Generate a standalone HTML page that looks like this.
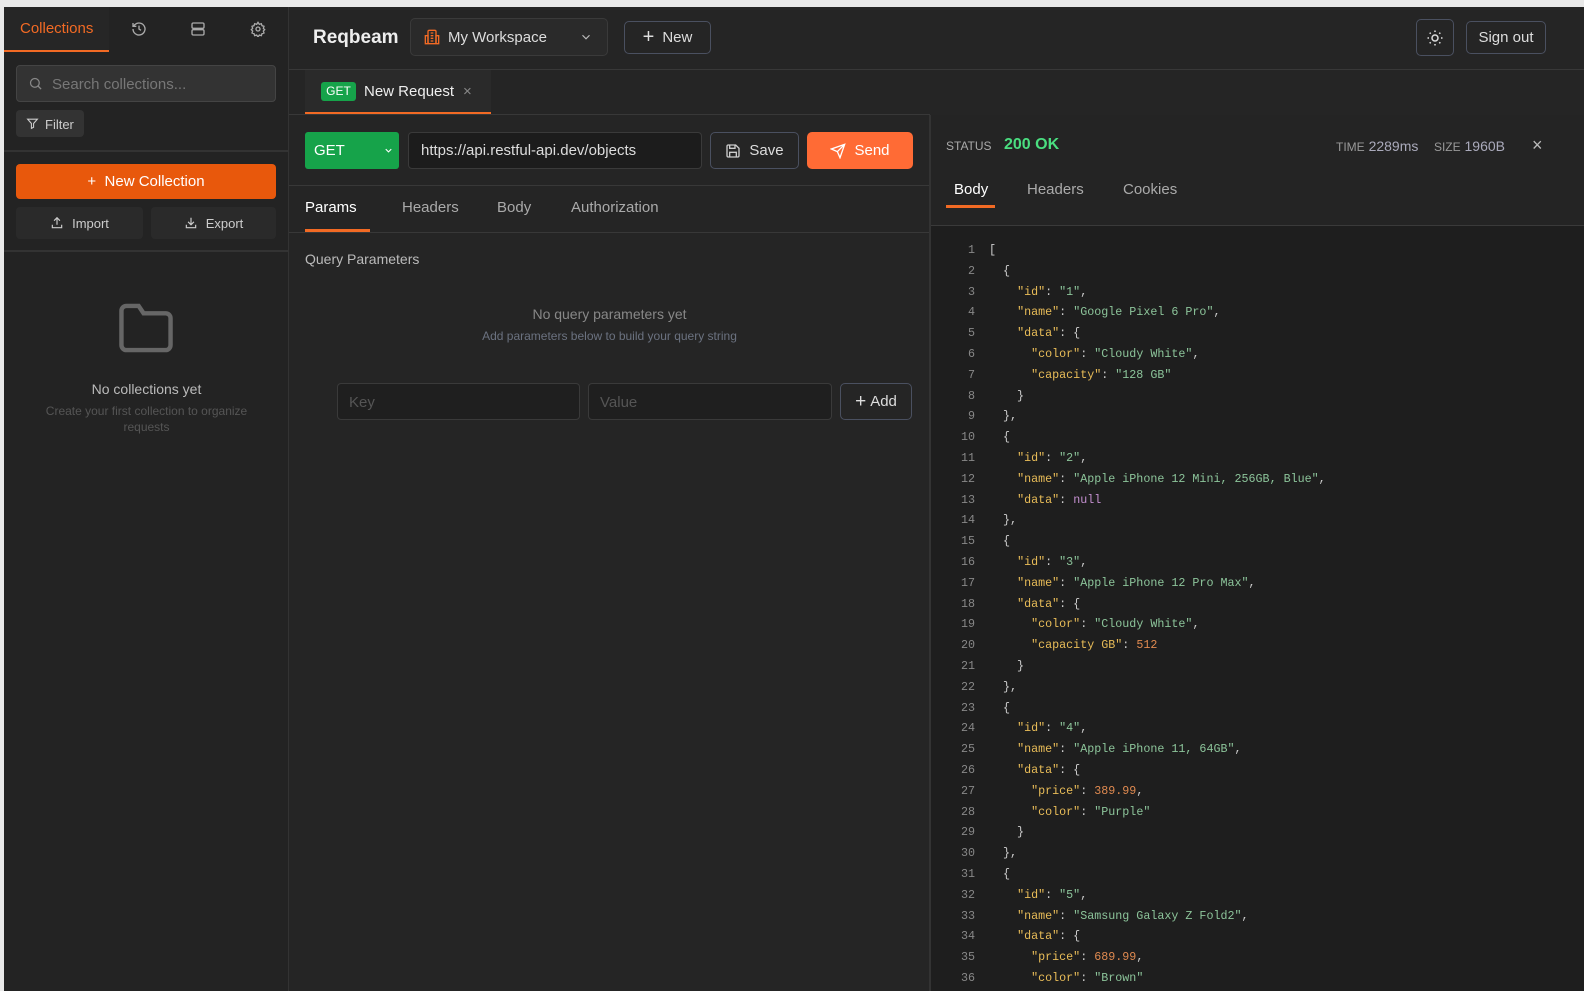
<!DOCTYPE html>
<html><head><meta charset="utf-8"><style>
*{box-sizing:border-box;margin:0;padding:0}
body{width:1584px;height:991px;overflow:hidden;background:#e9e9e9;font-family:"Liberation Sans",sans-serif;position:relative}
.abs{position:absolute}
#side{left:4px;top:7px;width:285px;height:984px;background:#232323;border-right:1px solid #333}
#main{left:289px;top:7px;width:1295px;height:984px;background:#252525}
.btn{position:absolute;border:1px solid #444;border-radius:5px;color:#ddd;font-size:15px;display:flex;align-items:center;justify-content:center;gap:8px}
.code{font-family:"Liberation Mono",monospace;font-size:11.7px;line-height:20.8px;white-space:pre;color:#ccc}
.k{color:#e8bc58}.s{color:#8cc49a}.n{color:#e08a50}.nl{color:#c48fd0}
.ln{color:#888;text-align:right}
</style></head><body>
<div id="side" class="abs">
 <div class="abs" style="left:0;top:0;width:105px;height:45px;border-bottom:2px solid #f26a24;background:#262626"></div>
 <div class="abs" style="left:16px;top:13px;color:#f26a24;font-size:15px">Collections</div>
 <svg class="abs" style="left:127px;top:14px" width="16" height="16" viewBox="0 0 24 24" fill="none" stroke="#aaa" stroke-width="2"><path d="M3 12a9 9 0 1 0 3-6.7L3 8"/><path d="M3 3v5h5"/><path d="M12 7v5l3 2"/></svg>
 <svg class="abs" style="left:186px;top:14px" width="16" height="16" viewBox="0 0 24 24" fill="none" stroke="#aaa" stroke-width="2"><rect x="3" y="3" width="18" height="8" rx="2"/><rect x="3" y="13" width="18" height="8" rx="2"/></svg>
 <svg class="abs" style="left:246px;top:14px" width="16" height="16" viewBox="0 0 24 24" fill="none" stroke="#aaa" stroke-width="2"><circle cx="12" cy="12" r="3"/><path d="M12 2l2 3 3-1 1 3 3 1-1 3 2 2-2 2 1 3-3 1-1 3-3-1-2 3-2-3-3 1-1-3-3-1 1-3-2-2 2-2-1-3 3-1 1-3 3 1z"/></svg>
 <div class="abs" style="left:12px;top:58px;width:260px;height:37px;background:#333;border:1px solid #444;border-radius:4px"></div>
 <svg class="abs" style="left:24px;top:69px" width="15" height="15" viewBox="0 0 24 24" fill="none" stroke="#888" stroke-width="2"><circle cx="11" cy="11" r="7"/><path d="M21 21l-5-5"/></svg>
 <div class="abs" style="left:48px;top:69px;color:#777;font-size:15px">Search collections...</div>
 <div class="abs" style="left:12px;top:103px;width:68px;height:27px;background:#333;border-radius:4px;color:#ccc;font-size:13px;padding:7px 0 0 29px">Filter</div>
 <svg class="abs" style="left:22px;top:110px" width="13" height="13" viewBox="0 0 24 24" fill="none" stroke="#ccc" stroke-width="2"><path d="M3 4h18l-7 8v7l-4 2v-9z"/></svg>
 <div class="abs" style="left:0;top:143px;width:285px;height:2px;background:#333"></div>
 <div class="abs" style="left:12px;top:157px;width:260px;height:35px;background:#e8580c;border-radius:4px;color:#fff;font-size:15px;text-align:center;line-height:35px">+&nbsp;&nbsp;New Collection</div>
 <div class="abs" style="left:12px;top:200px;width:127px;height:32px;background:#2a2a2a;border-radius:4px;color:#ccc;font-size:13px;display:flex;align-items:center;justify-content:center;gap:8px"><svg width="14" height="14" viewBox="0 0 24 24" fill="none" stroke="#ccc" stroke-width="2"><path d="M12 15V3M7 8l5-5 5 5M4 15v5h16v-5"/></svg>Import</div>
 <div class="abs" style="left:147px;top:200px;width:125px;height:32px;background:#2a2a2a;border-radius:4px;color:#ccc;font-size:13px;display:flex;align-items:center;justify-content:center;gap:8px"><svg width="14" height="14" viewBox="0 0 24 24" fill="none" stroke="#ccc" stroke-width="2"><path d="M12 3v12M7 10l5 5 5-5M4 15v5h16v-5"/></svg>Export</div>
 <div class="abs" style="left:0;top:243px;width:285px;height:2px;background:#333"></div>
 <svg class="abs" style="left:112px;top:294px" width="60" height="54" viewBox="0 0 24 22" fill="none" stroke="#666" stroke-width="1.8"><path d="M2 4a2 2 0 0 1 2-2h5l2 3h9a2 2 0 0 1 2 2v11a2 2 0 0 1-2 2H4a2 2 0 0 1-2-2z"/></svg>
 <div class="abs" style="left:0;top:374px;width:285px;text-align:center;color:#bbb;font-size:14px">No collections yet</div>
 <div class="abs" style="left:30px;top:396px;width:225px;text-align:center;color:#555;font-size:12px;line-height:16px">Create your first collection to organize requests</div>
</div>
<div id="main" class="abs">
 <div class="abs" style="left:24px;top:20px;color:#eee;font-size:19px;font-weight:bold">Reqbeam</div>
 <div class="btn" style="left:121px;top:11px;width:198px;height:38px;justify-content:flex-start;padding-left:13px;background:#2a2a2a;border-color:#3a3a3a"><svg width="16" height="16" viewBox="0 0 24 24" fill="none" stroke="#f26a24" stroke-width="2"><rect x="6" y="2" width="12" height="20" rx="2"/><path d="M2 10h4v12H2zM18 10h4v12h-4zM10 6h4M10 10h4M10 14h4M10 18h4"/></svg>My Workspace<svg style="margin-left:auto;margin-right:14px" width="14" height="14" viewBox="0 0 24 24" fill="none" stroke="#bbb" stroke-width="2"><path d="M6 9l6 6 6-6"/></svg></div>
 <div class="btn" style="left:335px;top:14px;width:87px;height:33px;border-color:#4a5060"><span style="font-size:20px;font-weight:300">+</span>New</div>
 <div class="btn" style="left:1127px;top:12px;width:38px;height:37px;border-color:#4a5060"><svg width="18" height="18" viewBox="0 0 24 24" fill="none" stroke="#ddd" stroke-width="2"><circle cx="12" cy="12" r="4"/><path d="M12 2v2M12 20v2M2 12h2M20 12h2M4.9 4.9l1.4 1.4M17.7 17.7l1.4 1.4M4.9 19.1l1.4-1.4M17.7 6.3l1.4-1.4"/></svg></div>
 <div class="btn" style="left:1177px;top:14px;width:80px;height:33px;border-color:#4a5060">Sign out</div>
 <div class="abs" style="left:0;top:62px;width:1295px;height:1px;background:#383838"></div>
 <div class="abs" style="left:16px;top:63px;width:186px;height:44px;background:#2a2a2a;border-bottom:2px solid #f26a24"></div>
 <div class="abs" style="left:32px;top:75px;width:35px;height:19px;background:#16a34a;border-radius:3px;color:#fff;font-size:12px;text-align:center;line-height:19px">GET</div>
 <div class="abs" style="left:75px;top:76px;color:#eee;font-size:15px">New Request</div>
 <div class="abs" style="left:174px;top:76px;color:#888;font-size:15px">×</div>
 <div class="abs" style="left:0;top:107px;width:641px;height:1px;background:#383838"></div>
 <div class="abs" style="left:16px;top:125px;width:94px;height:37px;background:#16a34a;border-radius:3px;color:#fff;font-size:15px;padding:10px 9px">GET<svg style="position:absolute;right:5px;top:13px" width="11" height="11" viewBox="0 0 24 24" fill="none" stroke="#fff" stroke-width="2.5"><path d="M6 9l6 6 6-6"/></svg></div>
 <div class="abs" style="left:119px;top:125px;width:294px;height:37px;background:#1c1c1c;border:1px solid #3a3a3a;border-radius:4px;color:#ddd;font-size:15px;padding:9px 12px">https://api.restful-api.dev/objects</div>
 <div class="btn" style="left:421px;top:125px;width:89px;height:37px;border-color:#4a5060"><svg width="16" height="16" viewBox="0 0 24 24" fill="none" stroke="#ccc" stroke-width="2"><path d="M5 3h11l5 5v11a2 2 0 0 1-2 2H5a2 2 0 0 1-2-2V5a2 2 0 0 1 2-2z"/><path d="M7 3v5h8V3M7 21v-7h10v7"/></svg>Save</div>
 <div class="btn" style="left:518px;top:125px;width:106px;height:37px;border:none;background:#ff6b35;color:#fff"><svg width="16" height="16" viewBox="0 0 24 24" fill="none" stroke="#fff" stroke-width="2"><path d="M22 2L11 13M22 2l-7 20-4-9-9-4z"/></svg>Send</div>
 <div class="abs" style="left:0;top:178px;width:641px;height:1px;background:#383838"></div>
 <div class="abs" style="left:16px;top:192px;color:#fff;font-size:15px">Params</div>
 <div class="abs" style="left:16px;top:222px;width:65px;height:3px;background:#f26a24"></div>
 <div class="abs" style="left:113px;top:192px;color:#aaa;font-size:15px">Headers</div>
 <div class="abs" style="left:208px;top:192px;color:#aaa;font-size:15px">Body</div>
 <div class="abs" style="left:282px;top:192px;color:#aaa;font-size:15px">Authorization</div>
 <div class="abs" style="left:0;top:225px;width:641px;height:1px;background:#383838"></div>
 <div class="abs" style="left:16px;top:244px;color:#bbb;font-size:14px">Query Parameters</div>
 <div class="abs" style="left:0;top:299px;width:641px;text-align:center;color:#888;font-size:14px">No query parameters yet</div>
 <div class="abs" style="left:0;top:322px;width:641px;text-align:center;color:#6b7280;font-size:12px">Add parameters below to build your query string</div>
 <div class="abs" style="left:48px;top:376px;width:243px;height:37px;background:#1f1f1f;border:1px solid #3a3a3a;border-radius:4px;color:#555;font-size:15px;padding:10px 11px">Key</div>
 <div class="abs" style="left:299px;top:376px;width:244px;height:37px;background:#1f1f1f;border:1px solid #3a3a3a;border-radius:4px;color:#555;font-size:15px;padding:10px 11px">Value</div>
 <div class="btn" style="left:551px;top:376px;width:72px;height:37px;border-color:#4a5060;gap:4px"><span style="font-size:19px;font-weight:300">+</span>Add</div>
 <div class="abs" style="left:640px;top:108px;width:2px;height:876px;background:#333"></div>
 <div class="abs" style="left:642px;top:108px;width:653px;height:876px;background:#242424"></div>
 <div class="abs" style="left:657px;top:132px;color:#aaa;font-size:12px">STATUS</div>
 <div class="abs" style="left:715px;top:129px;color:#4ade80;font-size:16px;font-weight:bold">200 OK</div>
 <div class="abs" style="left:1047px;top:131px;color:#999;font-size:14px"><span style="font-size:12px">TIME</span> <span style="color:#aab">2289ms</span>&nbsp;&nbsp;&nbsp; <span style="font-size:12px">SIZE</span> <span style="color:#aab">1960B</span></div>
 <div class="abs" style="left:1243px;top:128px;color:#bbb;font-size:18px">×</div>
 <div class="abs" style="left:665px;top:174px;color:#fff;font-size:15px">Body</div>
 <div class="abs" style="left:657px;top:198px;width:49px;height:3px;background:#f26a24"></div>
 <div class="abs" style="left:738px;top:174px;color:#aaa;font-size:15px">Headers</div>
 <div class="abs" style="left:834px;top:174px;color:#aaa;font-size:15px">Cookies</div>
 <div class="abs" style="left:642px;top:218px;width:653px;height:1px;background:#3a3a3a"></div>
 <div class="abs" style="left:642px;top:219px;width:653px;height:765px;background:#1e1e1e"></div>
 <div class="abs code ln" style="left:652px;top:233px;width:34px">1
2
3
4
5
6
7
8
9
10
11
12
13
14
15
16
17
18
19
20
21
22
23
24
25
26
27
28
29
30
31
32
33
34
35
36</div>
 <div class="abs code" style="left:700px;top:233px">[
  {
    <span class="k">"id"</span>: <span class="s">"1"</span>,
    <span class="k">"name"</span>: <span class="s">"Google Pixel 6 Pro"</span>,
    <span class="k">"data"</span>: {
      <span class="k">"color"</span>: <span class="s">"Cloudy White"</span>,
      <span class="k">"capacity"</span>: <span class="s">"128 GB"</span>
    }
  },
  {
    <span class="k">"id"</span>: <span class="s">"2"</span>,
    <span class="k">"name"</span>: <span class="s">"Apple iPhone 12 Mini, 256GB, Blue"</span>,
    <span class="k">"data"</span>: <span class="nl">null</span>
  },
  {
    <span class="k">"id"</span>: <span class="s">"3"</span>,
    <span class="k">"name"</span>: <span class="s">"Apple iPhone 12 Pro Max"</span>,
    <span class="k">"data"</span>: {
      <span class="k">"color"</span>: <span class="s">"Cloudy White"</span>,
      <span class="k">"capacity GB"</span>: <span class="n">512</span>
    }
  },
  {
    <span class="k">"id"</span>: <span class="s">"4"</span>,
    <span class="k">"name"</span>: <span class="s">"Apple iPhone 11, 64GB"</span>,
    <span class="k">"data"</span>: {
      <span class="k">"price"</span>: <span class="n">389.99</span>,
      <span class="k">"color"</span>: <span class="s">"Purple"</span>
    }
  },
  {
    <span class="k">"id"</span>: <span class="s">"5"</span>,
    <span class="k">"name"</span>: <span class="s">"Samsung Galaxy Z Fold2"</span>,
    <span class="k">"data"</span>: {
      <span class="k">"price"</span>: <span class="n">689.99</span>,
      <span class="k">"color"</span>: <span class="s">"Brown"</span></div>
</div>
</body></html>
